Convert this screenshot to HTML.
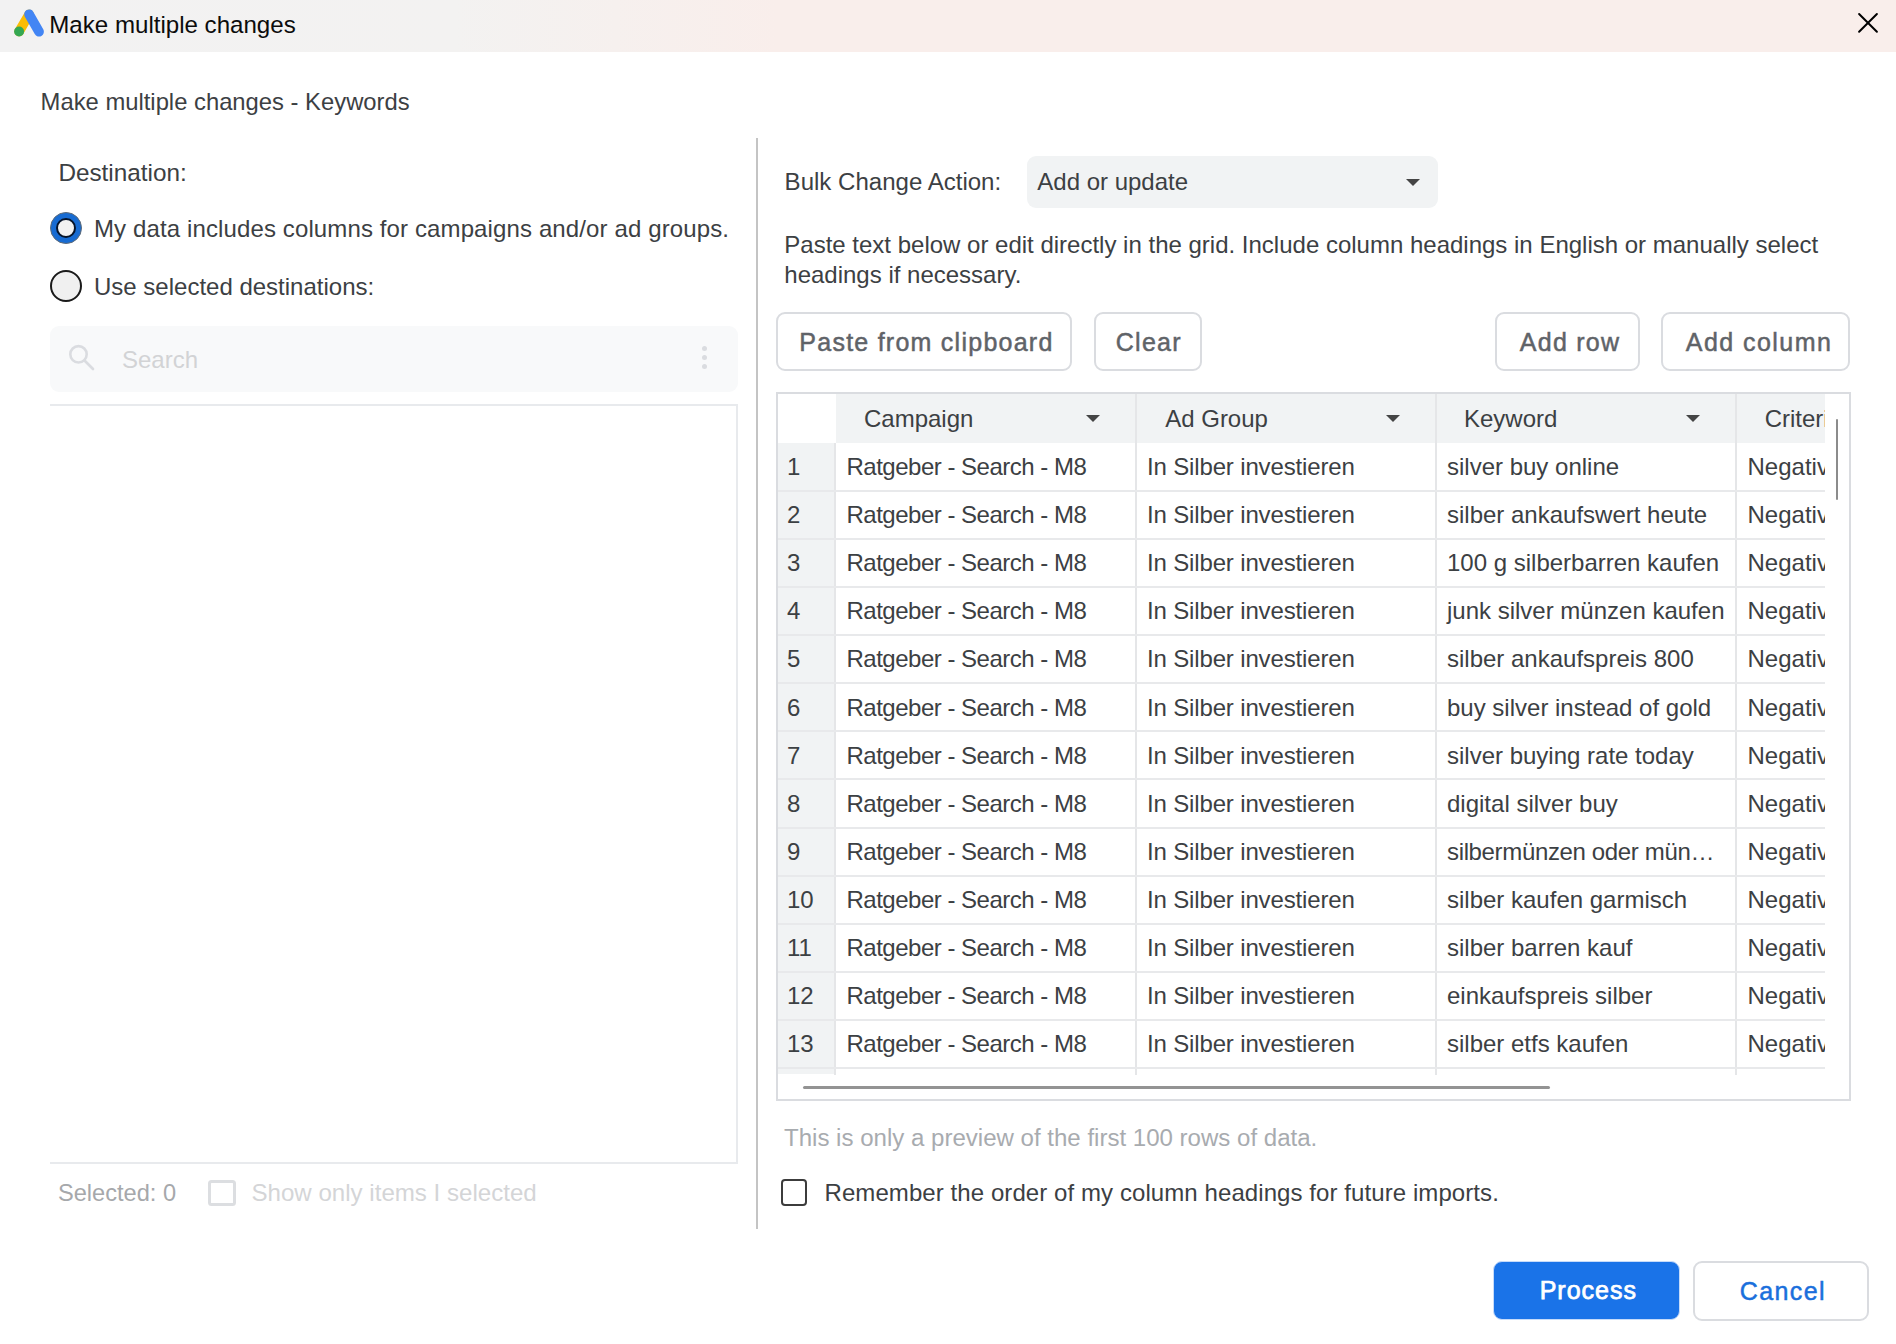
<!DOCTYPE html>
<html>
<head>
<meta charset="utf-8">
<title>Make multiple changes</title>
<style>
html,body{margin:0;padding:0;width:1896px;height:1344px;overflow:hidden;background:#fff;}
body{position:relative;font-family:"Liberation Sans",sans-serif;color:#3c4043;}
.t{position:absolute;white-space:nowrap;font-size:24px;line-height:24px;}
.bt{position:absolute;white-space:nowrap;font-size:25px;line-height:25px;}
.abs{position:absolute;box-sizing:border-box;}
.tri{position:absolute;width:0;height:0;border-left:7px solid transparent;border-right:7px solid transparent;border-top:7.5px solid #444;}
.btn{position:absolute;box-sizing:border-box;border:2px solid #dadce0;border-radius:9px;background:#fff;}
</style>
</head>
<body>
<div class="abs" style="left:0;top:0;width:1896px;height:51.6px;background:linear-gradient(90deg,#f2f2f2 0%,#f3f2f1 24%,#f9eeeb 41%,#f9eeeb 100%)"></div>
<svg class="abs" style="left:0;top:0" width="50" height="50" viewBox="0 0 50 50">
  <path d="M19.1 31.5 L29.1 14.3" stroke="#fbbc04" stroke-width="9.6" stroke-linecap="round" fill="none"/>
  <path d="M29.1 14.3 L39 31.7" stroke="#4285f4" stroke-width="9.8" stroke-linecap="round" fill="none"/>
  <circle cx="19.1" cy="31.5" r="5" fill="#34a853"/>
</svg>
<svg class="abs" style="left:1856px;top:12px" width="24" height="24" viewBox="0 0 24 24">
  <path d="M3.1 2 L20.9 19.8 M20.9 2 L3.1 19.8" stroke="#000" stroke-width="2" stroke-linecap="round"/>
</svg>

<div class="t" id="title" style="left:49.30px;top:13.10px;font-size:24.1px;line-height:24.1px;color:#0c0c0c">Make multiple changes</div>
<div class="t" id="subtitle" style="left:40.60px;top:89.55px;font-size:23.8px;line-height:23.8px">Make multiple changes - Keywords</div>
<div class="t" id="dest" style="left:58.40px;top:161.23px;font-size:24.3px;line-height:24.3px">Destination:</div>
<div class="abs" style="left:50px;top:212px;width:32px;height:32px;border-radius:50%;background:#176bd2;border:1px solid #5f6b78"></div>
<div class="abs" style="left:56.2px;top:218.2px;width:19.8px;height:19.8px;border-radius:50%;background:#f2f2f2;border:2.2px solid #06142a"></div>
<div class="t" id="mydata" style="left:94.00px;top:216.68px;letter-spacing:0.12px">My data includes columns for campaigns and/or ad groups.</div>
<div class="abs" style="left:50px;top:270px;width:32px;height:32px;border-radius:50%;background:#f0f0f0;border:2px solid #1a1a1a"></div>
<div class="t" id="usesel" style="left:94.00px;top:274.68px">Use selected destinations:</div>
<div class="abs" style="left:50px;top:326px;width:688px;height:66px;border-radius:9px;background:#f8f9fa"></div>
<svg class="abs" style="left:66px;top:342px" width="32" height="32" viewBox="0 0 32 32">
  <circle cx="12.5" cy="12.3" r="8.2" stroke="#dadce0" stroke-width="2.6" fill="none"/>
  <path d="M18.5 18.5 L27 27" stroke="#dadce0" stroke-width="2.7" stroke-linecap="round"/>
</svg>
<div class="t" id="search" style="left:122.00px;top:348.18px;color:#d2d3d5">Search</div>
<div class="abs" style="left:701.5px;top:346px;width:5px;height:5px;border-radius:50%;background:#dadce0"></div>
<div class="abs" style="left:701.5px;top:355px;width:5px;height:5px;border-radius:50%;background:#dadce0"></div>
<div class="abs" style="left:701.5px;top:364px;width:5px;height:5px;border-radius:50%;background:#dadce0"></div>
<div class="abs" style="left:50px;top:404px;width:688px;height:760px;border:2px solid #e8eaed;border-left:none"></div>
<div class="t" id="selected" style="left:58.00px;top:1181.62px;font-size:23.6px;line-height:23.6px;color:#a6a8ab">Selected: 0</div>
<div class="abs" style="left:208.3px;top:1180px;width:27.4px;height:26px;border:3px solid #dcdee1;border-radius:3.5px"></div>
<div class="t" id="showonly" style="left:251.50px;top:1181.20px;font-size:24.1px;line-height:24.1px;color:#d4d5d7">Show only items I selected</div>
<div class="abs" style="left:756px;top:138px;width:2px;height:1091px;background:#c4c4c4"></div>
<div class="t" id="bulk" style="left:784.60px;top:170.24px;font-size:24.05px;line-height:24.05px">Bulk Change Action:</div>
<div class="abs" style="left:1027px;top:156px;width:411px;height:52px;border-radius:9px;background:#f1f3f4"></div>
<div class="t" id="addorupdate" style="left:1037.30px;top:170.18px">Add or update</div>
<div class="tri" style="left:1406px;top:179px"></div>
<div class="t" id="para1" style="left:784.30px;top:233.28px">Paste text below or edit directly in the grid. Include column headings in English or manually select</div>
<div class="t" id="para2" style="left:784.30px;top:262.88px">headings if necessary.</div>
<div class="btn" style="left:776.3px;top:312.2px;width:296px;height:59.3px"></div>
<div class="bt" id="b_paste" style="left:799.30px;top:329.94px;color:#5f6368;-webkit-text-stroke:0.5px #5f6368;letter-spacing:1.25px">Paste from clipboard</div>
<div class="btn" style="left:1093.5px;top:312.2px;width:108.8px;height:59.3px"></div>
<div class="bt" id="b_clear" style="left:1115.80px;top:329.94px;color:#5f6368;-webkit-text-stroke:0.5px #5f6368;letter-spacing:1.25px">Clear</div>
<div class="btn" style="left:1495.2px;top:312.2px;width:145px;height:59.3px"></div>
<div class="bt" id="b_addrow" style="left:1519.80px;top:329.94px;color:#5f6368;-webkit-text-stroke:0.5px #5f6368;letter-spacing:1.25px">Add row</div>
<div class="btn" style="left:1661.2px;top:312.2px;width:189.2px;height:59.3px"></div>
<div class="bt" id="b_addcol" style="left:1685.80px;top:329.94px;color:#5f6368;-webkit-text-stroke:0.5px #5f6368;letter-spacing:1.45px">Add column</div>
<div class="abs" style="left:776px;top:392px;width:1075px;height:709px;border:2px solid #dadce0"></div>
<div class="abs" style="left:836px;top:394px;width:989px;height:49px;background:#f1f3f4"></div>
<div class="abs" style="left:778px;top:443px;width:57px;height:631px;background:#f1f3f4"></div>
<div class="abs" style="left:1134.5px;top:394px;width:2px;height:681px;background:#e5e6e8"></div>
<div class="abs" style="left:1434.5px;top:394px;width:2px;height:681px;background:#e5e6e8"></div>
<div class="abs" style="left:1734.5px;top:394px;width:2px;height:681px;background:#e5e6e8"></div>
<div class="abs" style="left:834px;top:443px;width:2px;height:632px;background:#e5e6e8"></div>
<div class="abs" style="left:778px;top:490.0px;width:1047px;height:2px;background:#e8e9eb"></div>
<div class="abs" style="left:778px;top:538.08px;width:1047px;height:2px;background:#e8e9eb"></div>
<div class="abs" style="left:778px;top:586.16px;width:1047px;height:2px;background:#e8e9eb"></div>
<div class="abs" style="left:778px;top:634.24px;width:1047px;height:2px;background:#e8e9eb"></div>
<div class="abs" style="left:778px;top:682.3199999999999px;width:1047px;height:2px;background:#e8e9eb"></div>
<div class="abs" style="left:778px;top:730.4px;width:1047px;height:2px;background:#e8e9eb"></div>
<div class="abs" style="left:778px;top:778.48px;width:1047px;height:2px;background:#e8e9eb"></div>
<div class="abs" style="left:778px;top:826.56px;width:1047px;height:2px;background:#e8e9eb"></div>
<div class="abs" style="left:778px;top:874.64px;width:1047px;height:2px;background:#e8e9eb"></div>
<div class="abs" style="left:778px;top:922.72px;width:1047px;height:2px;background:#e8e9eb"></div>
<div class="abs" style="left:778px;top:970.8px;width:1047px;height:2px;background:#e8e9eb"></div>
<div class="abs" style="left:778px;top:1018.88px;width:1047px;height:2px;background:#e8e9eb"></div>
<div class="abs" style="left:778px;top:1066.96px;width:1047px;height:2px;background:#e8e9eb"></div>
<div class="t" id="h_Ca" style="left:864.00px;top:406.68px">Campaign</div>
<div class="t" id="h_Ad" style="left:1165.20px;top:406.68px">Ad Group</div>
<div class="t" id="h_Ke" style="left:1464.00px;top:406.68px">Keyword</div>
<div class="t" id="h_Cr" style="left:1764.70px;top:406.68px">Criteria</div>
<div class="tri" style="left:1086px;top:415px"></div>
<div class="tri" style="left:1386px;top:415px"></div>
<div class="tri" style="left:1685.5px;top:415px"></div>
<div class="t" id="n0" style="left:787.00px;top:455.18px">1</div>
<div class="t" id="c0" style="left:846.50px;top:455.18px;letter-spacing:-0.5px">Ratgeber - Search - M8</div>
<div class="t" id="a0" style="left:1147.00px;top:455.18px;letter-spacing:-0.15px">In Silber investieren</div>
<div class="t" id="k0" style="left:1447.00px;top:455.18px">silver buy online</div>
<div class="t" id="r0" style="left:1747.50px;top:455.18px">Negative</div>
<div class="t" id="n1" style="left:787.00px;top:503.25px">2</div>
<div class="t" id="c1" style="left:846.50px;top:503.25px;letter-spacing:-0.5px">Ratgeber - Search - M8</div>
<div class="t" id="a1" style="left:1147.00px;top:503.25px;letter-spacing:-0.15px">In Silber investieren</div>
<div class="t" id="k1" style="left:1447.00px;top:503.25px">silber ankaufswert heute</div>
<div class="t" id="r1" style="left:1747.50px;top:503.25px">Negative</div>
<div class="t" id="n2" style="left:787.00px;top:551.32px">3</div>
<div class="t" id="c2" style="left:846.50px;top:551.32px;letter-spacing:-0.5px">Ratgeber - Search - M8</div>
<div class="t" id="a2" style="left:1147.00px;top:551.32px;letter-spacing:-0.15px">In Silber investieren</div>
<div class="t" id="k2" style="left:1447.00px;top:551.32px">100 g silberbarren kaufen</div>
<div class="t" id="r2" style="left:1747.50px;top:551.32px">Negative</div>
<div class="t" id="n3" style="left:787.00px;top:599.39px">4</div>
<div class="t" id="c3" style="left:846.50px;top:599.39px;letter-spacing:-0.5px">Ratgeber - Search - M8</div>
<div class="t" id="a3" style="left:1147.00px;top:599.39px;letter-spacing:-0.15px">In Silber investieren</div>
<div class="t" id="k3" style="left:1447.00px;top:599.39px">junk silver münzen kaufen</div>
<div class="t" id="r3" style="left:1747.50px;top:599.39px">Negative</div>
<div class="t" id="n4" style="left:787.00px;top:647.46px">5</div>
<div class="t" id="c4" style="left:846.50px;top:647.46px;letter-spacing:-0.5px">Ratgeber - Search - M8</div>
<div class="t" id="a4" style="left:1147.00px;top:647.46px;letter-spacing:-0.15px">In Silber investieren</div>
<div class="t" id="k4" style="left:1447.00px;top:647.46px">silber ankaufspreis 800</div>
<div class="t" id="r4" style="left:1747.50px;top:647.46px">Negative</div>
<div class="t" id="n5" style="left:787.00px;top:695.53px">6</div>
<div class="t" id="c5" style="left:846.50px;top:695.53px;letter-spacing:-0.5px">Ratgeber - Search - M8</div>
<div class="t" id="a5" style="left:1147.00px;top:695.53px;letter-spacing:-0.15px">In Silber investieren</div>
<div class="t" id="k5" style="left:1447.00px;top:695.53px">buy silver instead of gold</div>
<div class="t" id="r5" style="left:1747.50px;top:695.53px">Negative</div>
<div class="t" id="n6" style="left:787.00px;top:743.60px">7</div>
<div class="t" id="c6" style="left:846.50px;top:743.60px;letter-spacing:-0.5px">Ratgeber - Search - M8</div>
<div class="t" id="a6" style="left:1147.00px;top:743.60px;letter-spacing:-0.15px">In Silber investieren</div>
<div class="t" id="k6" style="left:1447.00px;top:743.60px">silver buying rate today</div>
<div class="t" id="r6" style="left:1747.50px;top:743.60px">Negative</div>
<div class="t" id="n7" style="left:787.00px;top:791.67px">8</div>
<div class="t" id="c7" style="left:846.50px;top:791.67px;letter-spacing:-0.5px">Ratgeber - Search - M8</div>
<div class="t" id="a7" style="left:1147.00px;top:791.67px;letter-spacing:-0.15px">In Silber investieren</div>
<div class="t" id="k7" style="left:1447.00px;top:791.67px">digital silver buy</div>
<div class="t" id="r7" style="left:1747.50px;top:791.67px">Negative</div>
<div class="t" id="n8" style="left:787.00px;top:839.74px">9</div>
<div class="t" id="c8" style="left:846.50px;top:839.74px;letter-spacing:-0.5px">Ratgeber - Search - M8</div>
<div class="t" id="a8" style="left:1147.00px;top:839.74px;letter-spacing:-0.15px">In Silber investieren</div>
<div class="t" id="k8" style="left:1447.00px;top:839.74px;letter-spacing:-0.35px">silbermünzen oder mün…</div>
<div class="t" id="r8" style="left:1747.50px;top:839.74px">Negative</div>
<div class="t" id="n9" style="left:787.00px;top:887.81px">10</div>
<div class="t" id="c9" style="left:846.50px;top:887.81px;letter-spacing:-0.5px">Ratgeber - Search - M8</div>
<div class="t" id="a9" style="left:1147.00px;top:887.81px;letter-spacing:-0.15px">In Silber investieren</div>
<div class="t" id="k9" style="left:1447.00px;top:887.81px">silber kaufen garmisch</div>
<div class="t" id="r9" style="left:1747.50px;top:887.81px">Negative</div>
<div class="t" id="n10" style="left:787.00px;top:935.88px">11</div>
<div class="t" id="c10" style="left:846.50px;top:935.88px;letter-spacing:-0.5px">Ratgeber - Search - M8</div>
<div class="t" id="a10" style="left:1147.00px;top:935.88px;letter-spacing:-0.15px">In Silber investieren</div>
<div class="t" id="k10" style="left:1447.00px;top:935.88px">silber barren kauf</div>
<div class="t" id="r10" style="left:1747.50px;top:935.88px">Negative</div>
<div class="t" id="n11" style="left:787.00px;top:983.95px">12</div>
<div class="t" id="c11" style="left:846.50px;top:983.95px;letter-spacing:-0.5px">Ratgeber - Search - M8</div>
<div class="t" id="a11" style="left:1147.00px;top:983.95px;letter-spacing:-0.15px">In Silber investieren</div>
<div class="t" id="k11" style="left:1447.00px;top:983.95px">einkaufspreis silber</div>
<div class="t" id="r11" style="left:1747.50px;top:983.95px">Negative</div>
<div class="t" id="n12" style="left:787.00px;top:1032.02px">13</div>
<div class="t" id="c12" style="left:846.50px;top:1032.02px;letter-spacing:-0.5px">Ratgeber - Search - M8</div>
<div class="t" id="a12" style="left:1147.00px;top:1032.02px;letter-spacing:-0.15px">In Silber investieren</div>
<div class="t" id="k12" style="left:1447.00px;top:1032.02px">silber etfs kaufen</div>
<div class="t" id="r12" style="left:1747.50px;top:1032.02px">Negative</div>
<div class="abs" style="left:1825px;top:394px;width:24px;height:705px;background:#fff"></div>
<div class="abs" style="left:803px;top:1086px;width:747px;height:2.8px;border-radius:2px;background:#939393"></div>
<div class="abs" style="left:1836px;top:418.6px;width:2px;height:81px;border-radius:1px;background:#8c8c8c"></div>
<div class="t" id="preview" style="left:784.00px;top:1125.53px;font-size:24.06px;line-height:24.06px;color:#a8abaf">This is only a preview of the first 100 rows of data.</div>
<div class="abs" style="left:780.8px;top:1179.3px;width:26.4px;height:26.8px;border:2.7px solid #3c3c3c;border-radius:4px"></div>
<div class="t" id="remember" style="left:824.50px;top:1181.28px;letter-spacing:0.08px">Remember the order of my column headings for future imports.</div>
<div class="btn" style="left:1493.4px;top:1261.3px;width:186.4px;height:58.8px;background:#1a73e8;border:1.6px solid #c6dbfa"></div>
<div class="bt" id="b_process" style="left:1539.70px;top:1278.44px;color:#fff;-webkit-text-stroke:0.75px #fff;letter-spacing:1.0px">Process</div>
<div class="btn" style="left:1693.2px;top:1261.3px;width:175.5px;height:59.6px"></div>
<div class="bt" id="b_cancel" style="left:1739.80px;top:1278.74px;color:#1a6fdc;-webkit-text-stroke:0.5px #1a6fdc;letter-spacing:1.4px">Cancel</div>
</body>
</html>
